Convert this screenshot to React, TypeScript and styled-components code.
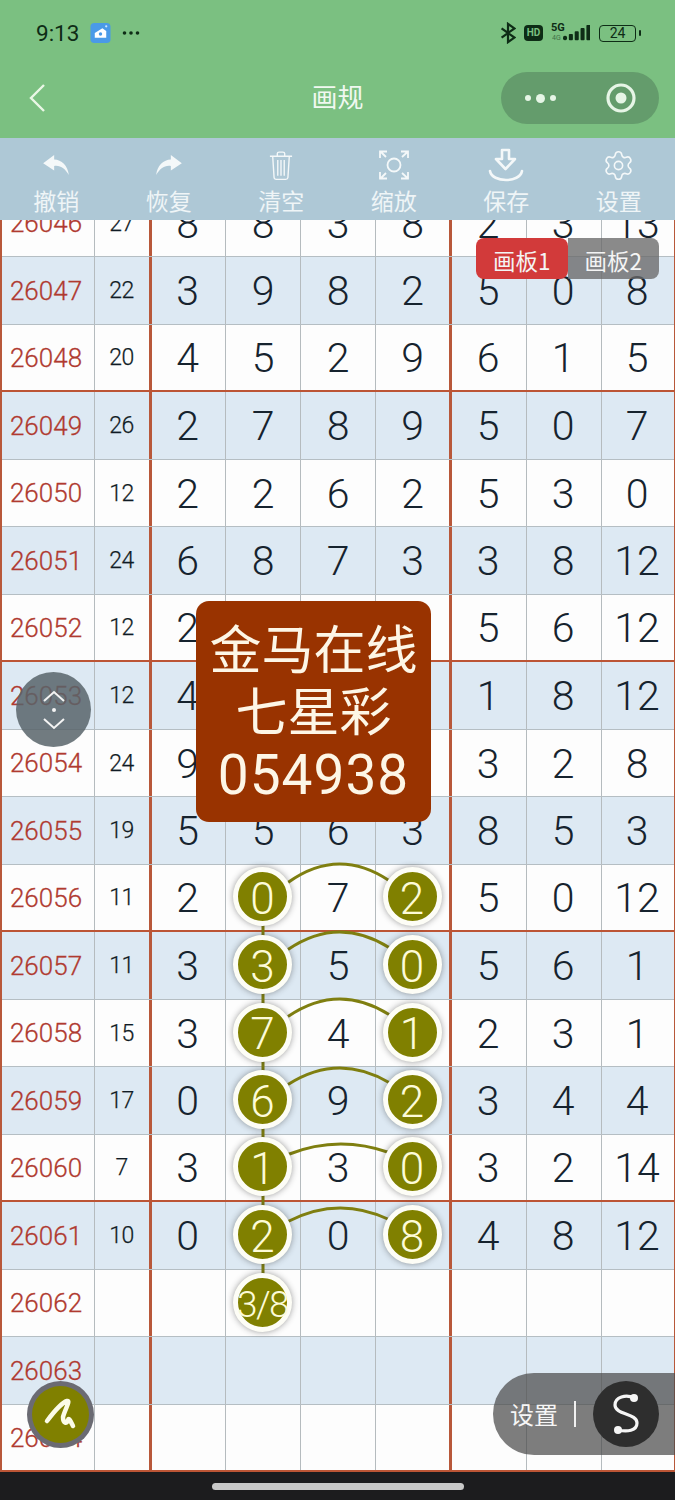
import React from "react";
import styled, { createGlobalStyle } from "styled-components";
import { Settings } from "lucide-react";

const Global = createGlobalStyle`
  html, body { margin: 0; padding: 0; background: #1c1c1e; }
  * { box-sizing: border-box; }
`;

const FONT = `Roboto, "Noto Sans CJK SC", sans-serif`;
const CJK = `"Noto Sans CJK SC", Roboto, sans-serif`;

const Page = styled.div`
  position: relative;
  width: 675px;
  height: 1500px;
  overflow: hidden;
  display: flex;
  flex-direction: column;
  font-family: ${FONT};
`;
const Header = styled.header`
  height: 138px;
  background: #7bc081;
  flex: none;
  display: flex;
  flex-direction: column;
`;
const StatusBar = styled.div`
  height: 66px;
  padding: 20px 36px 0 36px;
  display: flex;
  align-items: flex-start;
  color: #0e2c16;
`;
const Time = styled.span`
  font-size: 22.5px;
  line-height: 26px;
  letter-spacing: 0;
  font-family: Roboto, sans-serif;
`;
const StatusLeft = styled.div`
  display: flex;
  align-items: center;
  gap: 11px;
  height: 26px;
`;
const StatusRight = styled.div`
  margin-left: auto;
  display: flex;
  align-items: center;
  height: 26px;
`;
const HdBadge = styled.span`
  width: 19px;
  height: 16px;
  margin: 0 20px 0 8px;
  background: #0e2c16;
  color: #7bc081;
  border-radius: 4px;
  font: 700 10px/16px Roboto, sans-serif;
  text-align: center;
`;
const FiveG = styled.span`
  position: absolute;
  left: 551px;
  top: 22px;
  font: 700 11px/12px Roboto, sans-serif;
`;
const FourG = styled.span`
  position: absolute;
  left: 552px;
  top: 34px;
  font: 400 7px/8px Roboto, sans-serif;
  opacity: 0.55;
`;
const Battery = styled.span`
  margin: 0 3px 0 9px;
  width: 37px;
  height: 17px;
  border: 1.5px solid #0e2c16;
  border-radius: 4px;
  font: 400 14px/14px Roboto, sans-serif;
  text-align: center;
  position: relative;
  &::after {
    content: "";
    position: absolute;
    right: -6px;
    top: 4px;
    width: 2.5px;
    height: 6px;
    border-radius: 1px;
    background: #0e2c16;
  }
`;
const Nav = styled.div`
  height: 52px;
  margin-top: 6px;
  padding: 0 16px 0 29px;
  display: flex;
  align-items: center;
  position: relative;
`;
const Title = styled.div`
  position: absolute;
  left: 0;
  right: 0;
  top: -2px;
  text-align: center;
  font: 400 26px/52px ${CJK};
  color: #f0f8f0;
`;
const Capsule = styled.div`
  margin-left: auto;
  width: 158px;
  height: 52px;
  border-radius: 26px;
  background: #649c6c;
  display: flex;
  align-items: center;
  padding: 0 23px 0 24px;
  justify-content: space-between;
`;
const Dots = styled.div`
  display: flex;
  align-items: center;
  gap: 5px;
`;
const Dot = styled.i<{ $s: number }>`
  display: block;
  width: ${(p) => p.$s}px;
  height: ${(p) => p.$s}px;
  border-radius: 50%;
  background: #e6f5e6;
`;
const Toolbar = styled.div`
  height: 82px;
  flex: none;
  background: #aec8d6;
  display: grid;
  grid-template-columns: repeat(6, 1fr);
`;
const Tool = styled.div`
  display: flex;
  flex-direction: column;
  align-items: center;
  color: #eff5f7;
`;
const ToolIcon = styled.div`
  height: 54px;
  display: flex;
  align-items: center;
  justify-content: center;
`;
const ToolLabel = styled.span`
  font: 400 23px/32px ${CJK};
  margin-top: -8px;
`;
const Viewport = styled.div`
  height: 1252px;
  flex: none;
  overflow: hidden;
  background: #fdfdfd;
`;
const Table = styled.div`
  position: relative;
  margin-top: -30.5px;
  border-left: 2px solid #b8583a;
  border-right: 1.5px solid #b8583a;
`;
const Row = styled.div<{ $alt: boolean; $end: boolean }>`
  height: 67.5px;
  display: grid;
  grid-template-columns: 93px 57px 74px 75px 75px 76px 75px 75px 1fr;
  background: ${(p) => (p.$alt ? "#dde9f3" : "#fdfdfd")};
  border-bottom: ${(p) => (p.$end ? "2.5px solid #bc5535" : "1px solid #b5bec3")};
`;
const Cell = styled.div<{ $end?: boolean }>`
  position: relative;
  display: flex;
  align-items: center;
  justify-content: center;
  padding-top: 2px;
  font-weight: 300;
  font-size: 41px;
  color: #16232e;
  border-right: ${(p) => (p.$end ? "3px solid #b8583a" : "1.5px solid #b5bbbe")};
  &:nth-child(3), &:nth-child(n + 7) { padding-right: 2px; }
  &:last-child { border-right: 0; }
`;
const IdCell = styled(Cell)`
  font-size: 26px;
  font-weight: 300;
  color: #b03a30;
  padding-right: 4px;
  padding-top: 1px;
  -webkit-text-stroke: 0.3px #b03a30;
`;
const SumCell = styled(Cell)`
  font-size: 23px;
  font-weight: 300;
  color: #101b24;
  letter-spacing: -0.6px;
  padding-top: 1px;
  padding-right: 1px;
  -webkit-text-stroke: 0.25px #101b24;
`;
const Node = styled.div<{ $small?: boolean }>`
  position: absolute;
  z-index: 3;
  left: 50%;
  top: 50%;
  width: 59px;
  height: 59px;
  margin: -30px 0 0 -30px;
  padding-top: 4px;
  border-radius: 50%;
  background: #808000;
  border: 5px solid #fdfdf6;
  box-shadow: 0 0 6px rgba(40, 40, 40, 0.45);
  color: #fdfbd8;
  display: flex;
  align-items: center;
  justify-content: center;
  font-weight: 300;
  white-space: nowrap;
  font-size: ${(p) => (p.$small ? "37px" : "44px")};
  letter-spacing: ${(p) => (p.$small ? "-1.5px" : "0")};
`;
const Links = styled.svg`
  position: absolute;
  left: -2px;
  top: 0;
  z-index: 2;
  pointer-events: none;
`;
const BottomBar = styled.div`
  flex: 1;
  background: #1c1c1e;
  display: flex;
  justify-content: center;
  padding-top: 11px;
`;
const Handle = styled.div`
  width: 252px;
  height: 7px;
  border-radius: 4px;
  background: #c8c8c8;
`;
const Tabs = styled.div`
  position: absolute;
  left: 476px;
  top: 238px;
  z-index: 5;
  display: flex;
  width: 183px;
  height: 41px;
  font: 400 22.5px/44px ${CJK};
  color: #f4f4f4;
  text-align: center;
`;
const Tab = styled.div<{ $on?: boolean }>`
  flex: 1;
  border-radius: ${(p) => (p.$on ? "8px" : "0 8px 8px 0")};
  background: ${(p) => (p.$on ? "#d23a3a" : "rgba(105,105,105,0.78)")};
`;
const Popup = styled.div`
  position: absolute;
  left: 196px;
  top: 601px;
  z-index: 6;
  width: 235px;
  height: 221px;
  padding-top: 15px;
  background: #993300;
  border-radius: 13px;
  color: #fdf6e6;
  font: 400 52px/62px ${CJK};
  text-align: center;
`;
const PopupCode = styled.div`
  font-family: Roboto, sans-serif;
  font-size: 55px;
  line-height: 66px;
  padding-top: 2px;
  letter-spacing: 1px;
`;
const ScrollBall = styled.div`
  position: absolute;
  left: 16px;
  top: 672px;
  z-index: 5;
  width: 75px;
  height: 75px;
  border-radius: 50%;
  background: rgba(88, 100, 106, 0.85);
  display: flex;
  align-items: center;
  justify-content: center;
`;
const PenButton = styled.div`
  position: absolute;
  left: 27px;
  top: 1381px;
  z-index: 5;
  width: 67px;
  height: 67px;
  border-radius: 50%;
  background: #808000;
  border: 5px solid rgba(105, 105, 125, 0.92);
  display: flex;
  align-items: center;
  justify-content: center;
`;
const SettingsPill = styled.div`
  position: absolute;
  right: 0;
  top: 1373px;
  z-index: 5;
  width: 182px;
  height: 82px;
  border-radius: 41px 0 0 41px;
  background: rgba(75, 75, 75, 0.72);
  display: flex;
  align-items: center;
  padding-left: 17px;
  color: #f6f6f6;
  font: 400 24px/82px ${CJK};
`;
const Divider = styled.i`
  width: 1.5px;
  height: 26px;
  background: #f0f0f0;
  margin: 0 17px 0 16px;
`;
const SButton = styled.div`
  width: 66px;
  height: 66px;
  border-radius: 50%;
  background: #2e2e2e;
  display: flex;
  align-items: center;
  justify-content: center;
`;

type R = [number, string, string[]];
const rows: R[] = [
  [26046, "27", ["8", "8", "3", "8", "2", "3", "13"]],
  [26047, "22", ["3", "9", "8", "2", "5", "0", "8"]],
  [26048, "20", ["4", "5", "2", "9", "6", "1", "5"]],
  [26049, "26", ["2", "7", "8", "9", "5", "0", "7"]],
  [26050, "12", ["2", "2", "6", "2", "5", "3", "0"]],
  [26051, "24", ["6", "8", "7", "3", "3", "8", "12"]],
  [26052, "12", ["2", "4", "1", "5", "5", "6", "12"]],
  [26053, "12", ["4", "1", "2", "5", "1", "8", "12"]],
  [26054, "24", ["9", "8", "1", "6", "3", "2", "8"]],
  [26055, "19", ["5", "5", "6", "3", "8", "5", "3"]],
  [26056, "11", ["2", "0", "7", "2", "5", "0", "12"]],
  [26057, "11", ["3", "3", "5", "0", "5", "6", "1"]],
  [26058, "15", ["3", "7", "4", "1", "2", "3", "1"]],
  [26059, "17", ["0", "6", "9", "2", "3", "4", "4"]],
  [26060, "7", ["3", "1", "3", "0", "3", "2", "14"]],
  [26061, "10", ["0", "2", "0", "8", "4", "8", "12"]],
  [26062, "", ["", "3/8", "", "", "", "", ""]],
  [26063, "", ["", "", "", "", "", "", ""]],
  [26064, "", ["", "", "", "", "", "", ""]],
];

const arcs: [number, number, number][] = [
  [898, 882, 864],
  [965.5, 949, 932],
  [1033, 1016, 999],
  [1100.5, 1084, 1068],
  [1168, 1154, 1144],
  [1235.5, 1221, 1208],
];

const tools = ["撤销", "恢复", "清空", "缩放", "保存", "设置"];

function ToolGlyph({ i }: { i: number }) {
  const c = "#f4f8f9";
  if (i === 0)
    return (
      <svg width="28" height="22" viewBox="0 0 30 24">
        <path d="M13 1 L1 10 L13 18 L13 13 C20 12 25 16 29 23 C28 13 21 6 13 6 Z" fill={c} />
      </svg>
    );
  if (i === 1)
    return (
      <svg width="28" height="22" viewBox="0 0 30 24">
        <path d="M17 1 L29 10 L17 18 L17 13 C10 12 5 16 1 23 C2 13 9 6 17 6 Z" fill={c} />
      </svg>
    );
  if (i === 2)
    return (
      <svg width="24" height="31" viewBox="0 0 26 32" fill="none" stroke={c} strokeWidth="1.5">
        <path d="M1 6 H25 M9 6 V3 Q9 1.5 11 1.5 H15 Q17 1.5 17 3 V6 M4 6 L5.5 29 Q5.7 31 8 31 H18 Q20.3 31 20.5 29 L22 6 M9.5 10 V27 M13 10 V27 M16.5 10 V27" />
      </svg>
    );
  if (i === 3)
    return (
      <svg width="30" height="30" viewBox="0 0 30 30" fill="none" stroke={c} strokeWidth="1.8">
        <circle cx="15" cy="15" r="6.5" />
        <path d="M1 8 V1.5 H8 M1.5 1.5 L7 7 M22 1.5 H29 V8 M29 1.5 L23 7 M1 22 V28.5 H8 M1.5 28.5 L7 23 M22 28.5 H29 V22 M29 28.5 L23 23" />
      </svg>
    );
  if (i === 4)
    return (
      <svg width="36" height="34" viewBox="0 0 36 34" fill="none" stroke={c} strokeWidth="2.6" strokeLinejoin="round" strokeLinecap="round">
        <path d="M14 2 H21 V11 H27 L17.5 21 L8 11 H14 Z" />
        <path d="M2 23 C4 35 32 35 34 23" />
      </svg>
    );
  return <Settings size={33} strokeWidth={1.15} color={c} />;
}

export default function App() {
  return (
    <Page>
      <Global />
      <Header>
        <StatusBar>
          <StatusLeft>
            <Time>9:13</Time>
            <svg width="21" height="22" viewBox="0 0 22 22">
              <rect x="0.5" y="0.5" width="21" height="21" rx="4" fill="#4a9ae8" />
              <path d="M5 11 L13 6 L17 9 V16 H5 Z" fill="#fff" />
              <circle cx="11" cy="12" r="1.8" fill="#4a9ae8" />
              <circle cx="17" cy="4" r="1.2" fill="#cfe6ff" />
            </svg>
            <svg width="18" height="6" viewBox="0 0 18 6" fill="#0e2c16">
              <circle cx="2.5" cy="3" r="1.8" />
              <circle cx="9" cy="3" r="1.8" />
              <circle cx="15.5" cy="3" r="1.8" />
            </svg>
          </StatusLeft>
          <StatusRight>
            <svg width="16" height="22" viewBox="0 0 16 24" fill="none" stroke="#0e2c16" strokeWidth="2.4">
              <path d="M1 7 L15 17 L8 22 V2 L15 7 L1 17" />
            </svg>
            <HdBadge>HD</HdBadge>
            <FiveG>5G</FiveG>
            <FourG>4G</FourG>
            <svg width="27" height="18" viewBox="0 0 30 18" fill="#0e2c16">
              <rect x="0" y="12" width="4.5" height="5" rx="2" />
              <rect x="6.5" y="10" width="4.5" height="7" rx="1" />
              <rect x="13" y="7" width="4.5" height="10" rx="1" />
              <rect x="19.5" y="3.5" width="4.5" height="13.5" rx="1" />
              <rect x="26" y="0" width="4.5" height="17" rx="1" />
            </svg>
            <Battery>24</Battery>
          </StatusRight>
        </StatusBar>
        <Nav>
          <Title>画规</Title>
          <svg width="16" height="28" viewBox="0 0 16 28" fill="none" stroke="#eaf7e6" strokeWidth="2.4">
            <path d="M15 1 L2 14 L15 27" />
          </svg>
          <Capsule>
            <Dots>
              <Dot $s={6} />
              <Dot $s={9} />
              <Dot $s={6} />
            </Dots>
            <svg width="30" height="30" viewBox="0 0 30 30">
              <circle cx="15" cy="15" r="13" fill="none" stroke="#e6f5e6" strokeWidth="3.2" />
              <circle cx="15" cy="15" r="5.5" fill="#e6f5e6" />
            </svg>
          </Capsule>
        </Nav>
      </Header>
      <Toolbar>
        {tools.map((t, i) => (
          <Tool key={t}>
            <ToolIcon>
              <ToolGlyph i={i} />
            </ToolIcon>
            <ToolLabel>{t}</ToolLabel>
          </Tool>
        ))}
      </Toolbar>
      <Viewport>
        <Table>
          {rows.map(([id, sum, vals]) => (
            <Row key={id} $alt={id % 2 === 1} $end={id % 4 === 0}>
              <IdCell>{id}</IdCell>
              <SumCell $end>{sum}</SumCell>
              {vals.map((v, i) => {
                const hasNode = id >= 26056 && id <= 26062 && (i === 1 || (i === 3 && id < 26062));
                return (
                  <Cell key={i} $end={i === 3}>
                    {hasNode ? <Node $small={v.length > 2}>{v}</Node> : v}
                  </Cell>
                );
              })}
            </Row>
          ))}
          <Links width="675" height="1282.5" viewBox="0 189.5 675 1282.5" fill="none" stroke="#7f7f10" strokeWidth="3">
            <path d="M263 898 V1303" />
            {arcs.map(([c, a, p]) => (
              <path key={c} d={`M288 ${a} Q338 ${2 * p - a} 389 ${a - 2}`} />
            ))}
          </Links>
        </Table>
      </Viewport>
      <BottomBar>
        <Handle />
      </BottomBar>

      <Tabs>
        <Tab $on>画板1</Tab>
        <Tab>画板2</Tab>
      </Tabs>
      <Popup>
        <div>金马在线</div>
        <div>七星彩</div>
        <PopupCode>054938</PopupCode>
      </Popup>
      <ScrollBall>
        <svg width="36" height="44" viewBox="0 0 36 44" fill="none" stroke="#f4f4f4" strokeWidth="2">
          <path d="M8 13 L18 4 L28 13 M8 31 L18 40 L28 31" />
          <circle cx="18" cy="22" r="2" fill="#f4f4f4" stroke="none" />
        </svg>
      </ScrollBall>
      <PenButton>
        <svg width="36" height="36" viewBox="0 0 36 36" fill="none" stroke="#fbfbe8" strokeWidth="4.5" strokeLinecap="round" strokeLinejoin="round">
          <path d="M4 24 C10 16 18 6 24 4 C28 3 22 12 20 20 C20 27 24 27 25 23 C26 20 28 25 30 29" />
        </svg>
      </PenButton>
      <SettingsPill>
        设置
        <Divider />
        <SButton>
          <svg width="42" height="50" viewBox="0 0 42 50" fill="none" stroke="#f6f6f6" strokeWidth="3.2" strokeLinecap="round">
            <path d="M29 9 C21 5 10 8 10 16 C10 26 32 24 32 34 C32 42 22 43 13 41" />
            <circle cx="29" cy="9" r="4" fill="#f6f6f6" stroke="none" />
            <circle cx="13" cy="41" r="4" fill="#f6f6f6" stroke="none" />
          </svg>
        </SButton>
      </SettingsPill>
    </Page>
  );
}
